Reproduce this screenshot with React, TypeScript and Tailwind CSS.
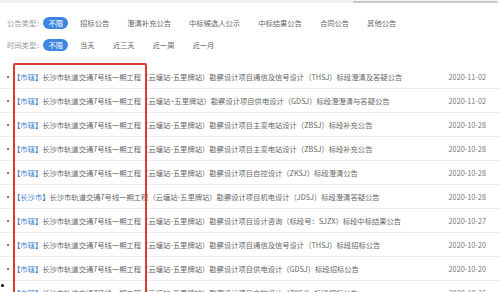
import React from "react";

type Row = { region: string; rest: string; date: string };

const P = "长沙市轨道交通7号线一期工程（云塘站-五里牌站）勘察设计项目";
const rows: Row[] = [
  { region: "市辖", rest: P + "通信及信号设计（THSJ）标段澄清及答疑公告", date: "2020-11-02" },
  { region: "市辖", rest: "长沙市轨道交通7号线一期工程（云塘站~五里牌站）勘察设计项目供电设计（GDSJ）标段澄澄清与答疑公告", date: "2020-11-02" },
  { region: "市辖", rest: P + "主变电站设计（ZBSJ）标段补充公告", date: "2020-10-28" },
  { region: "市辖", rest: P + "主变电站设计（ZBSJ）标段补充公告", date: "2020-10-28" },
  { region: "市辖", rest: P + "自控设计（ZKSJ）标段澄清公告", date: "2020-10-28" },
  { region: "长沙市", rest: P + "机电设计（JDSJ）标段澄清答疑公告", date: "2020-10-28" },
  { region: "市辖", rest: P + "设计咨询（标段号：SJZX）标段中标结果公告", date: "2020-10-27" },
  { region: "市辖", rest: P + "通信及信号设计（THSJ）标段招标公告", date: "2020-10-20" },
  { region: "市辖", rest: P + "供电设计（GDSJ）标段招标公告", date: "2020-10-20" },
  { region: "市辖", rest: P + "自控设计（ZKSJ）标段招标公告", date: "2020-10-16" },
];

function FilterRow({ label, items }: { label: string; items: string[] }) {
  return (
    <div className="flex items-center h-[12px] pl-[7px]">
      <span className="text-[#999] leading-[12px]">{label}</span>
      <div className="flex items-center gap-[6px]">
        <span className="h-[12px] px-[5px] rounded-full bg-[#3d86e0] text-white flex items-center leading-[12px]">
          不限
        </span>
        {items.map((it) => (
          <span key={it} className="px-[6px] text-[#666] leading-[12px]">
            {it}
          </span>
        ))}
      </div>
    </div>
  );
}

export default function App() {
  return (
    <div className="relative w-[499px] h-[292px] overflow-hidden bg-white font-['Noto_Sans_CJK_SC','Noto_Sans',sans-serif] text-[7.3px]">
      <div className="flex h-[3px] bg-[#f0f0f0]">
        <div className="flex-1" />
        <div className="w-[144px] mr-[2px] mt-[1px] h-[1.5px] bg-[#c3cad2]" />
      </div>
      <div className="flex flex-col gap-[10px] pt-[14px]">
        <FilterRow
          label="公告类型："
          items={["招标公告", "澄清补充公告", "中标候选人公示", "中标结果公告", "合同公告", "其他公告"]}
        />
        <FilterRow label="时间类型：" items={["当天", "近三天", "近一周", "近一月"]} />
      </div>
      <div className="mt-[14px] flex flex-col">
        {rows.map((r, i) => (
          <div key={i} className="flex items-center h-[24px] border-b border-[#ececec] shrink-0">
            <span className="ml-[7px] w-[2px] h-[2px] rounded-full bg-[#555] shrink-0" />
            <span className="ml-[4px] flex-1 whitespace-nowrap text-[#666] leading-[12px]">
              <span className="text-[#2f6fb8]">【</span>
              <span className="text-[#3f86cf]">{r.region}</span>
              <span className="text-[#2f6fb8]">】</span>
              {r.rest}
            </span>
            <span className="mr-[13px] text-[#777] leading-[12px] shrink-0">{r.date}</span>
          </div>
        ))}
      </div>
      <div className="absolute left-[13px] top-[63px] w-[134px] h-[240px] border-2 border-[#d63b33] rounded-[2px]" />
      <div className="absolute left-[1px] top-[284px] w-[3px] h-[3px] rounded-full bg-black" />
    </div>
  );
}
